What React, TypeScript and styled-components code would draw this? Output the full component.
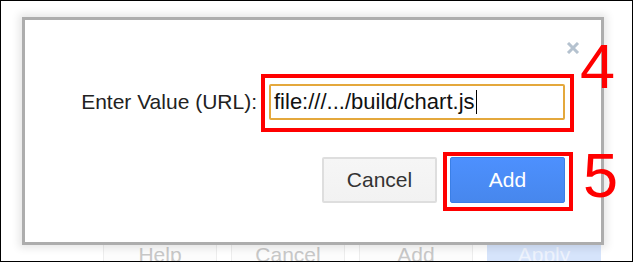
import React from 'react'
import styled, { createGlobalStyle } from 'styled-components'

const GlobalStyle = createGlobalStyle`
  html,
  body {
    margin: 0;
    padding: 0;
    background: #fff;
  }

  body {
    font-family: 'Liberation Sans', Arial, sans-serif;
  }
`

const Frame = styled.div`
  position: relative;
  box-sizing: border-box;
  width: 633px;
  height: 262px;
  border: 1px solid #000;
  overflow: hidden;
  background: #fff;
`

/* page behind the modal, only its footer peeks out */
const PageFooter = styled.div`
  display: flex;
  justify-content: flex-end;
  gap: 14px;
  padding: 236px 31px 0 0;
`

const GhostButton = styled.div<{ $primary?: boolean }>`
  flex: none;
  box-sizing: border-box;
  width: 114px;
  height: 36px;
  display: flex;
  align-items: center;
  justify-content: center;
  font-size: 21px;
  line-height: 24px;
  border: 1px solid ${(p) => (p.$primary ? '#d6e4fb' : '#ededed')};
  border-radius: 2px;
  background: ${(p) => (p.$primary ? '#d6e4fb' : '#fcfcfc')};
  color: ${(p) => (p.$primary ? '#eef3fd' : '#c8c8c8')};
`

const Dialog = styled.div`
  position: absolute;
  left: 21px;
  top: 16px;
  box-sizing: border-box;
  width: 582px;
  border: 3px solid #adadad;
  background: #fff;
  box-shadow: 0 0 8px 3px rgba(0, 0, 0, 0.1);
  padding: 64px 36px 39px 0;
`

const Close = styled.button`
  position: absolute;
  top: 22px;
  right: 21px;
  width: 14px;
  height: 12px;
  padding: 0;
  border: 0;
  background: none;
  display: block;
`

const FieldRow = styled.div`
  display: flex;
  justify-content: flex-end;
  align-items: center;
  gap: 12px;
`

const Label = styled.label`
  font-size: 21px;
  line-height: 24px;
  color: #222;
`

const Field = styled.div`
  box-sizing: border-box;
  width: 296px;
  height: 36px;
  display: flex;
  align-items: center;
  padding: 0 0 1px 3px;
  border: 2px solid #e4a83c;
  border-radius: 2px;
  font-size: 22px;
  line-height: 24px;
  color: #111;
  white-space: nowrap;
`

const Caret = styled.span`
  width: 1px;
  height: 24px;
  margin-left: 1px;
  background: #000;
`

const Actions = styled.div`
  display: flex;
  justify-content: flex-end;
  gap: 13px;
  margin-top: 37px;
`

const Button = styled.button<{ $primary?: boolean }>`
  box-sizing: border-box;
  width: 115px;
  height: 46px;
  padding: 0;
  font-family: 'Liberation Sans', Arial, sans-serif;
  font-size: 21px;
  border-radius: 2px;
  border: ${(p) => (p.$primary ? '1px solid #3b7fe6' : '2px solid #dedede')};
  background: ${(p) =>
    p.$primary ? 'linear-gradient(#4d90fe, #4787ed)' : 'linear-gradient(#f6f6f6, #f2f2f2)'};
  color: ${(p) => (p.$primary ? '#fff' : '#333')};
`

/* red tutorial marks drawn over the screenshot */
const Marked = styled.div`
  position: relative;
  display: flex;
`

const Ring = styled.span<{ $inset: string }>`
  position: absolute;
  inset: ${(p) => p.$inset};
  border: 4px solid #f00;
  pointer-events: none;
`

const Tag = styled.span<{ $left: number; $top: number }>`
  position: absolute;
  left: calc(100% + ${(p) => p.$left}px);
  top: ${(p) => p.$top}px;
  font-size: 63px;
  line-height: 1;
  color: #f00;
  pointer-events: none;
`

const CloseIcon = () => (
  <svg width="14" height="12" viewBox="0 0 14 12">
    <path d="M2 1 L12 11 M12 1 L2 11" stroke="#b5c2cf" strokeWidth="3" />
  </svg>
)

export default function App() {
  return (
    <>
      <GlobalStyle />
      <Frame>
        <PageFooter>
          <GhostButton>Help</GhostButton>
          <GhostButton>Cancel</GhostButton>
          <GhostButton>Add</GhostButton>
          <GhostButton $primary>Apply</GhostButton>
        </PageFooter>

        <Dialog role="dialog">
          <Close aria-label="Close">
            <CloseIcon />
          </Close>

          <FieldRow>
            <Label>Enter Value (URL):</Label>
            <Marked>
              <Field role="textbox">
                file:///.../build/chart.js
                <Caret />
              </Field>
              <Ring $inset="-10px -9px -12px -8px" />
              <Tag $left={15} $top={-49}>4</Tag>
            </Marked>
          </FieldRow>

          <Actions>
            <Button>Cancel</Button>
            <Marked>
              <Button $primary>Add</Button>
              <Ring $inset="-5px -8px -8px -7px" />
              <Tag $left={18} $top={-13}>5</Tag>
            </Marked>
          </Actions>
        </Dialog>
      </Frame>
    </>
  )
}
